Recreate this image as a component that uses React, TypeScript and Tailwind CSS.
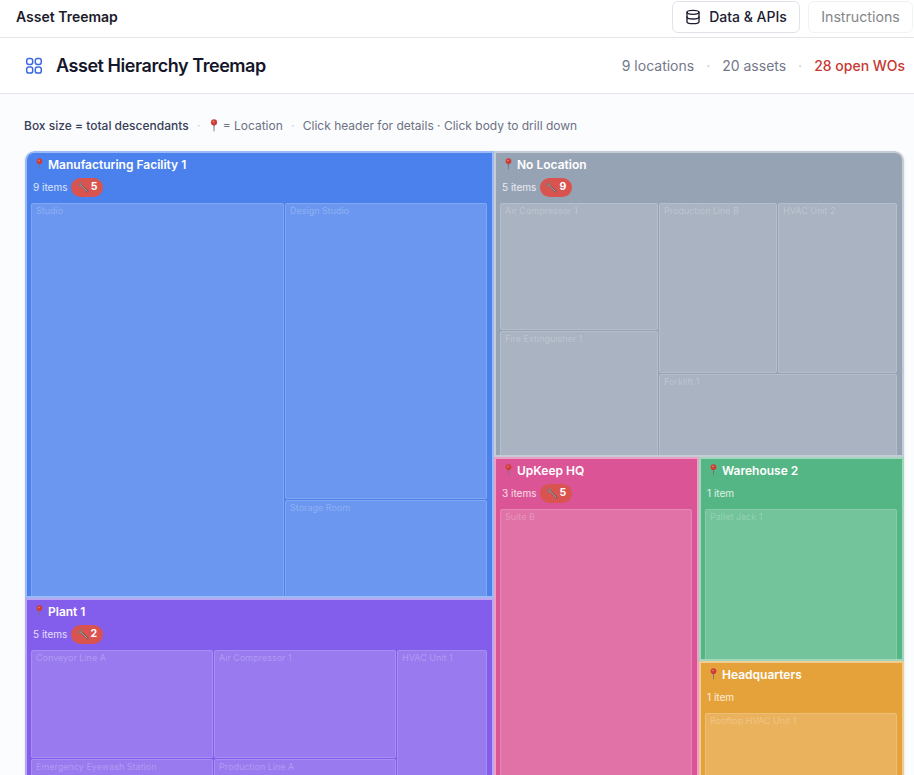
import React from "react";
import { Database } from "lucide-react";

function Pin({ className = "" }: { className?: string }) {
  return (
    <svg viewBox="0 0 10 14" className={"shrink-0 " + className} aria-hidden="true">
      <path d="M4.300 6h1.400l-.3 7.400h-.8z" fill="#75757f" />
      <circle cx="5" cy="3.700" r="3.300" fill="#cb3f38" />
      <circle cx="4.300" cy="2.800" r="0.900" fill="#ec8a80" />
    </svg>
  );
}

function Wrench() {
  return (
    <svg viewBox="0 0 12 12" className="h-[12px] w-[12px] shrink-0" fill="none" aria-hidden="true">
      <path d="M4 4.200l6.600 6.300" stroke="#68565b" strokeWidth="1.800" strokeLinecap="round" />
      <path d="M0.900 2.900c.4 1.700 2 2.300 3.300 1.400C5.200 3.100 4.600 1.400 2.900 .900" stroke="#857679" strokeWidth="1.300" strokeLinecap="round" />
      <path d="M3.700 4.100l6.400 6.100" stroke="#bfb0b0" strokeWidth="0.900" strokeLinecap="round" />
    </svg>
  );
}

function Leaf({ label, className = "" }: { label: string; className?: string }) {
  return (
    <div className={"shrink-0 overflow-hidden whitespace-nowrap rounded-[2px] border border-white/15 bg-white/[0.18] pl-1 text-[9px] leading-[13px] text-white/25 " + className}>
      {label}
    </div>
  );
}

type NodeProps = {
  title: string;
  items: string;
  orders?: number;
  className: string;
  children: React.ReactNode;
};

function LocationNode({ title, items, orders, className, children }: NodeProps) {
  return (
    <section className={"shrink-0 overflow-hidden border-2 border-white/45 pl-1 " + className}>
      <header className="h-[50px] pl-0.5 pt-[2px] text-white">
        <div className="flex h-5 items-center">
          <Pin className="-mt-[2px] ml-[2px] mr-[4px] h-[12px] w-[9px]" />
          <h2 className="whitespace-nowrap text-[12px] font-semibold leading-[18px]">{title}</h2>
        </div>
        <div className="mt-[2px] flex h-5 items-center">
          <span className="whitespace-nowrap text-[10px] leading-4 text-white/80">{items}</span>
          {orders !== undefined && (
            <span className="ml-1 flex h-[19px] w-8 items-center justify-center gap-[2px] rounded-full bg-[#d9534f] pr-px text-[10.500px] font-bold">
              <Wrench />
              {orders}
            </span>
          )}
        </div>
      </header>
      {children}
    </section>
  );
}

export default function App() {
  return (
    <div className="h-[775px] w-[914px] overflow-hidden bg-[#fafcfe] font-['Inter',sans-serif]">
      <div className="flex h-[38px] items-start justify-between border-b border-[#e3e5e9] bg-white pl-4">
        <h1 className="mt-[7px] text-[14px] font-semibold leading-5 text-[#1c1c2b]">Asset Treemap</h1>
        <div className="flex gap-2 pr-[1px] pt-[1px]">
          <button className="flex h-8 w-32 items-center justify-center gap-2 rounded-md border border-[#e1e3ea] bg-white pb-px text-[14px] font-medium text-[#1b1b32]">
            <Database className="h-4 w-4" />
            Data &amp; APIs
          </button>
          <button className="h-8 w-[105px] rounded-md border border-[#f1f2f4] bg-white pb-px text-[14.200px] text-[#85858a]">Instructions</button>
        </div>
      </div>

      <div className="flex h-14 items-center justify-between border-b border-[#e3e5ea] bg-white pl-[25px] pr-[9px]">
        <div className="flex items-center">
          <svg viewBox="0 0 18 18" className="mr-[13px] h-[18px] w-[18px]" fill="none" stroke="#3e6ae1" strokeWidth="1.500" aria-hidden="true">
            <rect x="1.700" y="1.500" width="6" height="6" rx="2.200" />
            <rect x="10.300" y="1.500" width="6" height="6" rx="2.200" />
            <rect x="1.700" y="10.100" width="6" height="6" rx="2.200" />
            <rect x="10.300" y="10.100" width="6" height="6" rx="2.200" />
          </svg>
          <h2 className="whitespace-nowrap text-[18px] font-semibold tracking-tight text-[#14162a]">Asset Hierarchy Treemap</h2>
        </div>
        <div className="flex items-center whitespace-nowrap text-[14px] text-[#73788a]">
          <span>9 locations</span>
          <span className="w-7 text-center text-[#c3c7d0]">·</span>
          <span>20 assets</span>
          <span className="w-7 text-center text-[#c3c7d0]">·</span>
          <span className="font-medium text-[#c73830]">28 open WOs</span>
        </div>
      </div>

      <main className="pl-6">
        <div className="flex h-[57px] items-center whitespace-nowrap pt-[7px] text-[12px] text-[#6d7183]">
          <span className="font-medium text-[#393e55]">Box size = total descendants</span>
          <span className="w-5 text-center text-[#c8ccd5]">·</span>
          <Pin className="-mt-px mr-[4px] h-[13px] w-[10px]" />
          <span>= Location</span>
          <span className="w-5 text-center text-[#c8ccd5]">·</span>
          <span>Click header for details · Click body to drill down</span>
        </div>

        <div className="ml-px flex h-[640px] w-[879px] overflow-hidden rounded-t-[9px] shadow-sm">
          <div className="flex w-[469px] shrink-0 flex-col">
            <LocationNode title="Manufacturing Facility 1" items="9 items" orders={5} className="h-[447px] rounded-tl-[9px] bg-[#4b81ed]">
              <div className="flex h-[394px] gap-px">
                <Leaf label="Studio" className="w-[253px]" />
                <div className="flex flex-col gap-px">
                  <Leaf label="Design Studio" className="h-[296px] w-[202px]" />
                  <Leaf label="Storage Room" className="h-[110px] w-[202px]" />
                </div>
              </div>
            </LocationNode>
            <LocationNode title="Plant 1" items="5 items" orders={2} className="h-[300px] bg-[#835dec]">
              <div className="flex gap-px">
                <div className="flex flex-col gap-px">
                  <Leaf label="Conveyor Line A" className="h-[108px] w-[182px]" />
                  <Leaf label="Emergency Eyewash Station" className="h-[108px] w-[182px]" />
                </div>
                <div className="flex flex-col gap-px">
                  <Leaf label="Air Compressor 1" className="h-[108px] w-[182px]" />
                  <Leaf label="Production Line A" className="h-[108px] w-[182px]" />
                </div>
                <Leaf label="HVAC Unit 1" className="h-[217px] w-[90px]" />
              </div>
            </LocationNode>
          </div>

          <div className="flex w-[410px] shrink-0 flex-col">
            <LocationNode title="No Location" items="5 items" orders={9} className="h-[306px] rounded-tr-[9px] bg-[#96a3b5]">
              <div className="flex gap-px">
                <div className="flex flex-col gap-px">
                  <Leaf label="Air Compressor 1" className="h-[127px] w-[158px]" />
                  <Leaf label="Fire Extinguisher 1" className="h-[140px] w-[158px]" />
                </div>
                <div className="flex flex-col gap-px">
                  <div className="flex gap-px">
                    <Leaf label="Production Line B" className="h-[170px] w-[118px]" />
                    <Leaf label="HVAC Unit 2" className="h-[170px] w-[119px]" />
                  </div>
                  <Leaf label="Forklift 1" className="h-[100px] w-[238px]" />
                </div>
              </div>
            </LocationNode>
            <div className="flex">
              <LocationNode title="UpKeep HQ" items="3 items" orders={5} className="h-[400px] w-[205px] bg-[#db5495]">
                <Leaf label="Suite B" className="h-[340px] w-[192px]" />
              </LocationNode>
              <div className="flex flex-col">
                <LocationNode title="Warehouse 2" items="1 item" className="h-[204px] w-[205px] bg-[#55b685]">
                  <Leaf label="Pallet Jack 1" className="h-[160px] w-[192px]" />
                </LocationNode>
                <LocationNode title="Headquarters" items="1 item" className="h-[200px] w-[205px] bg-[#e6a23a]">
                  <Leaf label="Rooftop HVAC Unit 1" className="h-[160px] w-[192px]" />
                </LocationNode>
              </div>
            </div>
          </div>
        </div>
      </main>
    </div>
  );
}
